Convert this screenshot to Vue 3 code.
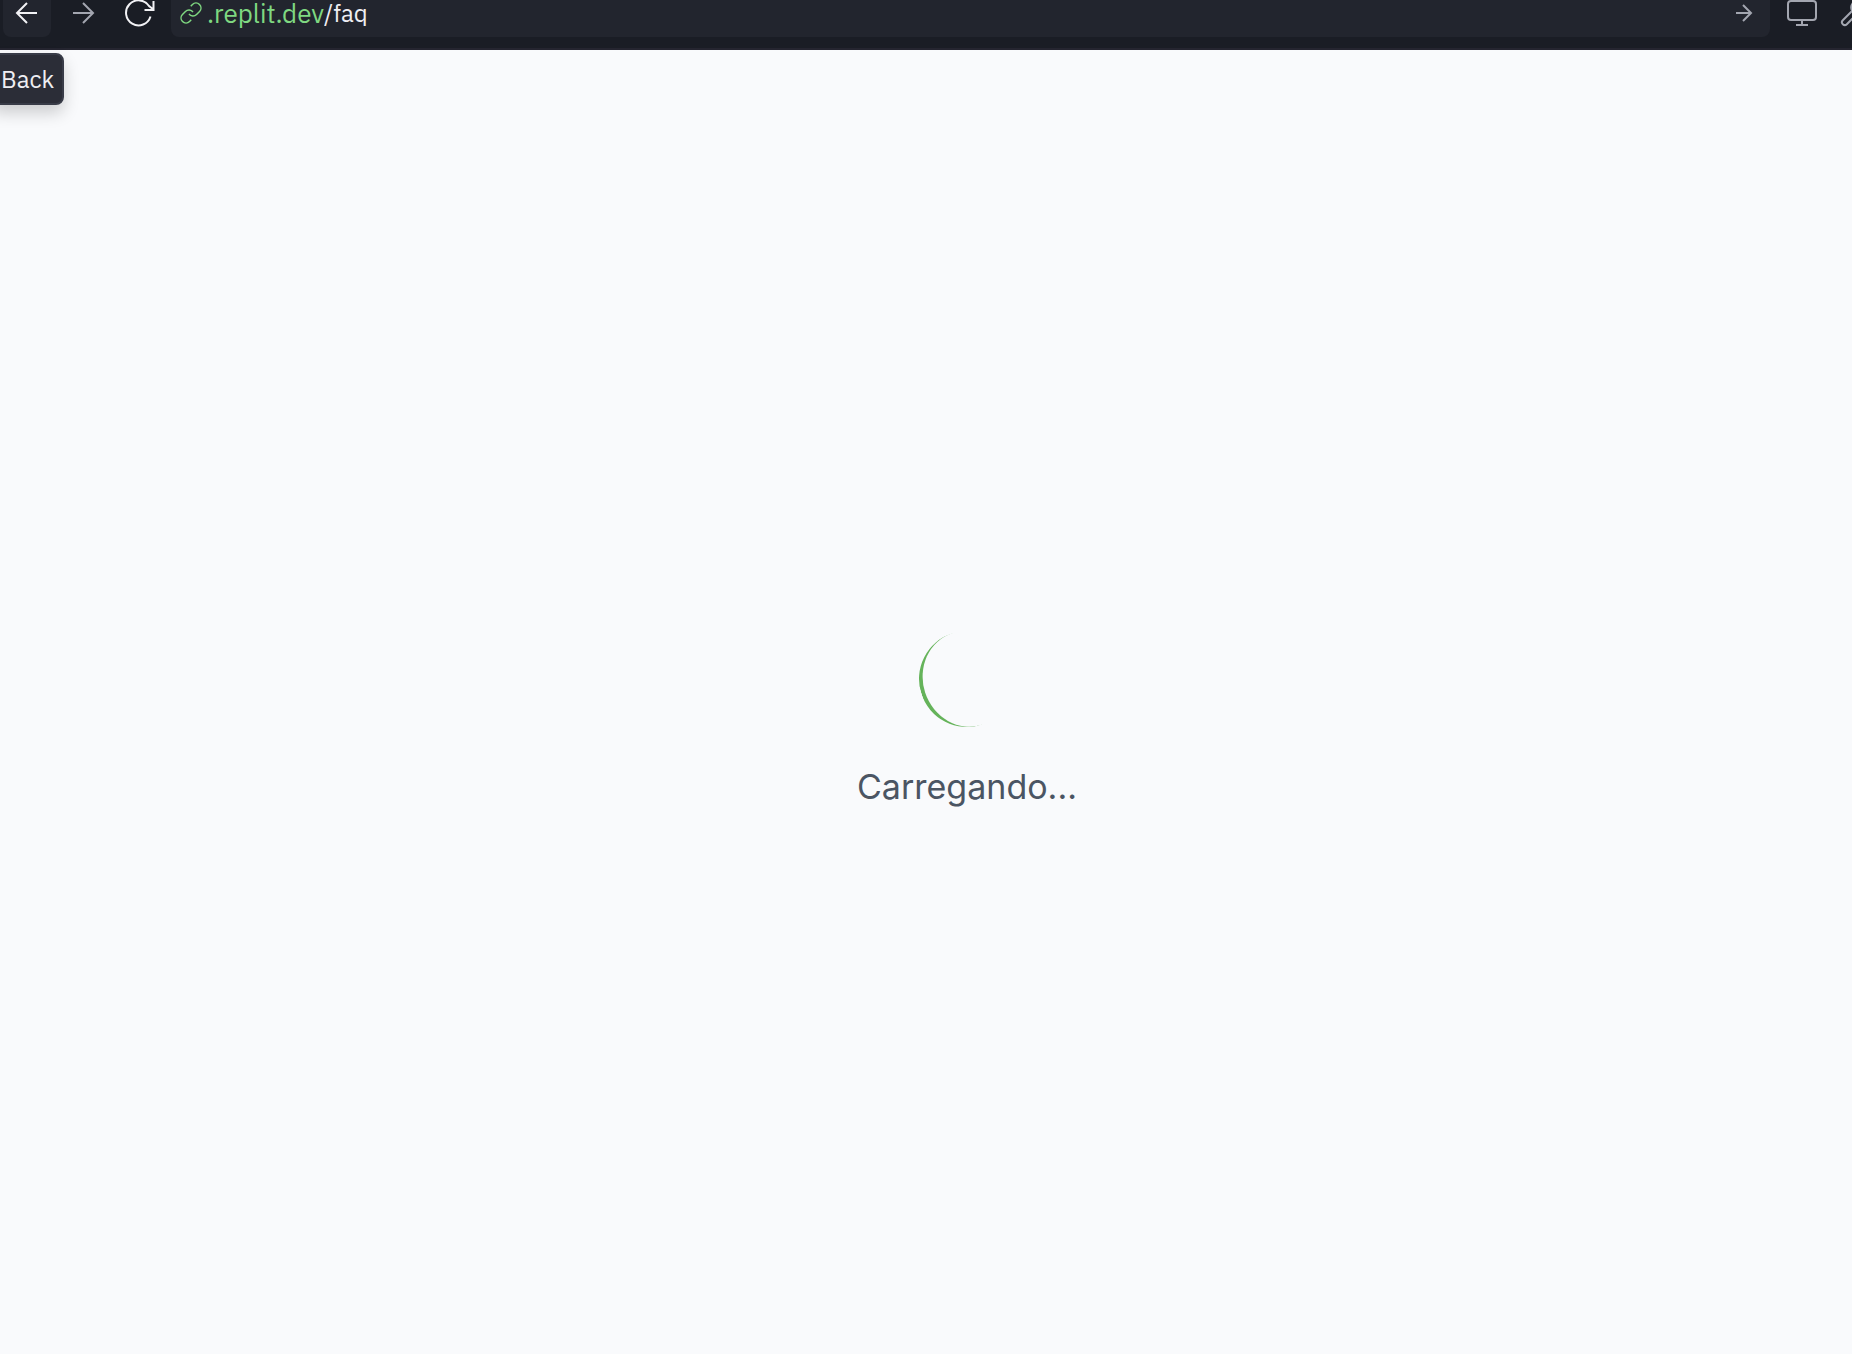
<script setup>
import { ref } from 'vue'

const path = ref('/faq')
</script>

<template>
  <div class="webview">
    <header class="toolbar">
      <nav class="history" aria-label="History">
        <button class="tool active" type="button" aria-label="Back" aria-describedby="back-tip">
          <svg width="24" height="24" viewBox="0 0 24 24"><path d="M22 12H2M12 2 2 12l10 10" /></svg>
        </button>
        <button class="tool muted" type="button" aria-label="Forward">
          <svg width="24" height="24" viewBox="0 0 24 24"><path d="M2 12h20M12 2l10 10-10 10" /></svg>
        </button>
        <button class="tool" type="button" aria-label="Reload">
          <svg width="32" height="32" viewBox="0 0 32 32"><path d="M27.500 19.500A12.500 12.500 0 1 1 26 9L30.500 12.500M30.500 4v9h-9" /></svg>
        </button>
      </nav>
      <form class="address" @submit.prevent>
        <svg class="link" width="24" height="24" viewBox="0 0 24 24">
          <path d="M10 13a5 5 0 0 0 7.540.540l3-3a5 5 0 0 0-7.070-7.070l-1.720 1.710M14 11a5 5 0 0 0-7.540-.540l-3 3a5 5 0 0 0 7.070 7.070l1.710-1.710" />
        </svg>
        <span class="host">.replit.dev</span>
        <input v-model="path" class="path" type="text" aria-label="Path" spellcheck="false" />
        <button class="go muted" type="submit" aria-label="Go">
          <svg width="20" height="20" viewBox="0 0 20 20"><path d="M2 10h15M9 2l8 8-8 8" /></svg>
        </button>
      </form>
      <div class="devtools">
        <button class="tool muted" type="button" aria-label="Screen size">
          <svg width="32" height="32" viewBox="0 0 32 32"><rect x="2" y="4" width="28" height="19" rx="3" /><path d="M16 23v5M10 28h12" /></svg>
        </button>
        <button class="tool muted" type="button" aria-label="Developer tools">
          <svg width="32" height="32" viewBox="0 0 24 24">
            <path class="wrench" d="M14.700 6.300a1 1 0 0 0 0 1.400l1.600 1.600a1 1 0 0 0 1.400 0l3.770-3.770a6 6 0 0 1-7.940 7.940l-6.910 6.910a2.120 2.120 0 0 1-3-3l6.910-6.910a6 6 0 0 1 7.940-7.940z" />
          </svg>
        </button>
      </div>
      <div id="back-tip" class="tooltip" role="tooltip">Back</div>
    </header>
    <main class="page">
      <div class="loading" role="status">
        <div class="spinner"></div>
        <p class="message">Carregando...</p>
      </div>
    </main>
  </div>
</template>

<style>
body {
  margin: 0;
  background: #f9fafc;
}
</style>

<style scoped>
.webview {
  display: flex;
  flex-direction: column;
  height: 100vh;
  overflow: hidden;
  font-family: "IBM Plex Sans", Roboto, sans-serif;
  font-size: 24px;
}

.toolbar {
  position: relative;
  display: flex;
  flex: none;
  align-items: flex-end;
  gap: 8px;
  box-sizing: border-box;
  height: 50px;
  padding: 0 0 11px 3px;
  border-bottom: 2px solid #252530;
  background: #1a1d25;
}

.history,
.devtools {
  display: flex;
  flex: none;
  gap: 8px;
}

.devtools {
  gap: 4px;
  width: 74px;
}

button {
  display: flex;
  flex: none;
  align-items: center;
  justify-content: center;
  padding: 0;
  border: 0;
  background: none;
  color: #f2f2f5;
}

.tool {
  width: 48px;
  height: 48px;
  border-radius: 8px;
}

.active {
  background: #22252e;
}

.muted {
  color: #a3a6b0;
}

svg {
  flex: none;
  fill: none;
  stroke: currentColor;
  stroke-width: 2;
}

.wrench {
  stroke-width: 1.500;
}

.address {
  display: flex;
  flex: 1;
  align-items: center;
  box-sizing: border-box;
  min-width: 0;
  height: 48px;
  padding: 0 16px 0 8px;
  border-radius: 8px;
  background: #22252e;
  line-height: 26px;
}

.link {
  margin-right: 4px;
  color: #7fd881;
  stroke-width: 1.500;
}

.host {
  color: #7fd881;
  font-size: 26px;
}

.path {
  flex: 1;
  min-width: 0;
  height: 26px;
  padding: 0;
  border: 0;
  outline: 0;
  background: none;
  color: #eeeef2;
  font: inherit;
}

.tooltip {
  position: absolute;
  z-index: 1;
  top: 53px;
  left: -9px;
  box-sizing: border-box;
  height: 52px;
  padding: 0 8px;
  border: 2px solid #383b47;
  border-radius: 8px;
  background: #2b2d37;
  box-shadow: 0 8px 16px rgba(0, 0, 0, 0.18);
  color: #eeeef2;
  line-height: 48px;
}

.page {
  display: flex;
  flex: 1;
  align-items: center;
  justify-content: center;
  box-sizing: border-box;
  padding: 42px 0 0 82px;
  background: #f9fafc;
}

.loading {
  display: flex;
  flex-direction: column;
  align-items: center;
  gap: 32px;
}

.spinner {
  box-sizing: border-box;
  width: 96px;
  height: 96px;
  border-bottom: 4px solid #65b35a;
  border-radius: 50%;
  transform: rotate(72deg);
}

.message {
  margin: 0;
  color: #4b5563;
  font-family: Inter, sans-serif;
  font-size: 34px;
  line-height: 56px;
}
</style>
